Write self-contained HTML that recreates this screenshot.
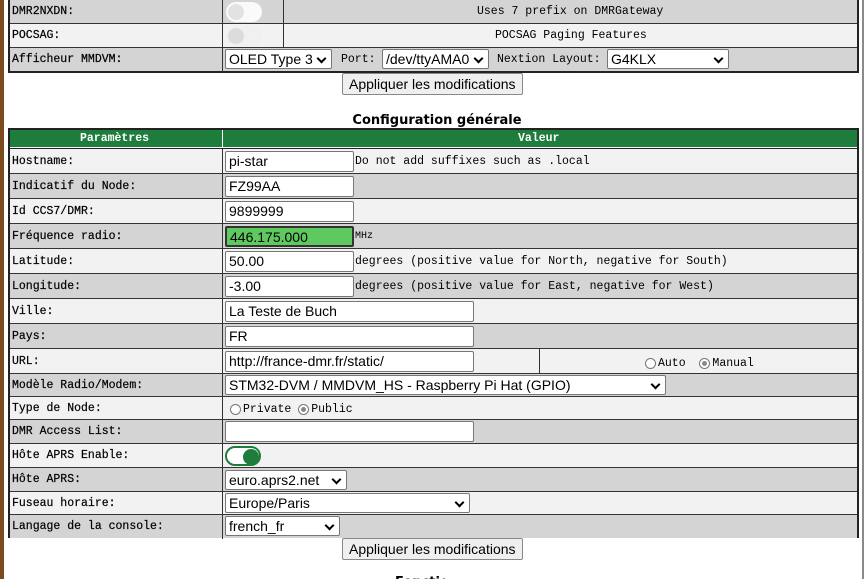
<!DOCTYPE html>
<html><head><meta charset="utf-8"><style>
*{box-sizing:border-box;margin:0;padding:0}
body{width:866px;height:579px;overflow:hidden;background:#fff;position:relative;font-family:"Liberation Mono",monospace;font-size:11.5px;color:#000}
.brown{position:absolute;left:0;top:0;width:4px;height:579px;background:#7b4a1e}
.rline{position:absolute;left:862px;top:0;width:2px;height:579px;background:#8a8a8a}
.tbl{position:absolute;left:8px;width:851px;border:2px solid #222;border-top:none;background:#222}
.row{position:absolute;left:0;width:847px;border-bottom:1px solid #333}
.g{background:#d4d4d4}.l{background:#f2f2f2}
.lab{position:absolute;left:2px;top:0;bottom:0;display:flex;align-items:center;white-space:nowrap;-webkit-text-stroke:0.2px #000}
.vl{position:absolute;left:212px;top:0;bottom:-1px;width:1px;background:#333}
.in{position:absolute;height:21px;border:1px solid #777;background:#fff;font-family:"Liberation Sans",sans-serif;font-size:14px;padding-left:3px;line-height:19px;border-radius:2px;white-space:nowrap;overflow:hidden}
.sel{position:absolute;height:20px;border:1px solid #777;background:#fff;font-family:"Liberation Sans",sans-serif;font-size:14px;padding-left:3px;line-height:18px;border-radius:2px;white-space:nowrap}
.sel:after{content:"";position:absolute;right:6px;top:5px;width:5px;height:5px;border-right:2px solid #000;border-bottom:2px solid #000;transform:rotate(45deg)}
.tx{position:absolute;top:0;bottom:0;display:flex;align-items:center;white-space:nowrap}
.btn{position:absolute;height:22px;border:1px solid #888;background:#efefef;border-radius:2px;font-family:"Liberation Sans",sans-serif;font-size:14px;line-height:20px;padding:0 6px}
.tog{position:absolute;width:36px;height:20px;border-radius:10px;background:#fff}
.tog i{position:absolute;left:2px;top:2px;width:16px;height:16px;border-radius:8px;background:#e2e2e2}
.rad{display:inline-block;width:11px;height:11px;border:1px solid #777;border-radius:50%;background:#fff;vertical-align:-1px;margin-right:2px;position:relative}
.rad.on:after{content:"";position:absolute;left:2px;top:2px;width:5px;height:5px;border-radius:50%;background:#888}
</style></head><body>
<div class="brown"></div><div class="rline"></div>

<div class="tbl" style="top:0;height:73px">
 <div class="row g" style="top:0;height:24px"><div class="lab">DMR2NXDN:</div><div class="vl"></div><div class="vl" style="left:273px"></div>
  <div class="tog" style="left:216px;top:2px;background:#fafafa"><i></i></div><div class="tx" style="left:467px">Uses 7 prefix on DMRGateway</div></div>
 <div class="row l" style="top:24px;height:24px"><div class="lab">POCSAG:</div><div class="vl"></div><div class="vl" style="left:273px"></div>
  <div class="tog" style="left:216px;top:2px;background:#f0f0f0"><i style="background:#dcdcdc"></i></div><div class="tx" style="left:485px">POCSAG Paging Features</div></div>
 <div class="row g" style="top:48px;height:23px;border-bottom:none"><div class="lab">Afficheur MMDVM:</div><div class="vl"></div>
  <div class="sel" style="left:215px;top:1px;width:107px">OLED Type 3</div>
  <div class="tx" style="left:331px">Port:</div>
  <div class="sel" style="left:372px;top:1px;width:107px">/dev/ttyAMA0</div>
  <div class="tx" style="left:487px">Nextion Layout:</div>
  <div class="sel" style="left:597px;top:1px;width:122px">G4KLX</div></div>
</div>
<div class="btn" style="left:342px;top:73px">Appliquer les modifications</div>

<div style="position:absolute;left:4px;width:866px;top:113px;text-align:center;font-family:'DejaVu Sans',sans-serif;font-weight:bold;font-size:13px">Configuration générale</div>

<div class="tbl" style="top:128px;height:410px;border-top:2px solid #222">
 <div class="row" style="top:0;height:18px;background:#1e7d3c;color:#fff;font-weight:bold;border-bottom:1px solid #fff">
  <div class="tx" style="left:70px">Paramètres</div><div class="vl" style="background:#fff"></div><div class="tx" style="left:508px">Valeur</div></div>

 <div class="row l" style="top:19px;height:25px"><div class="lab">Hostname:</div><div class="vl"></div><div class="in" style="left:215px;top:2px;width:129px">pi-star</div><div class="tx" style="left:345px">Do not add suffixes such as .local</div></div>
 <div class="row g" style="top:44px;height:25px"><div class="lab">Indicatif du Node:</div><div class="vl"></div><div class="in" style="left:215px;top:2px;width:129px">FZ99AA</div></div>
 <div class="row l" style="top:69px;height:25px"><div class="lab">Id CCS7/DMR:</div><div class="vl"></div><div class="in" style="left:215px;top:2px;width:129px">9899999</div></div>
 <div class="row g" style="top:94px;height:25px"><div class="lab">Fréquence radio:</div><div class="vl"></div><div class="in" style="left:215px;top:2px;width:129px;background:#5ec95e;border:2px solid #333">446.175.000</div><div class="tx" style="left:345px;font-size:10px">MHz</div></div>
 <div class="row l" style="top:119px;height:25px"><div class="lab">Latitude:</div><div class="vl"></div><div class="in" style="left:215px;top:2px;width:129px">50.00</div><div class="tx" style="left:345px">degrees (positive value for North, negative for South)</div></div>
 <div class="row g" style="top:144px;height:25px"><div class="lab">Longitude:</div><div class="vl"></div><div class="in" style="left:215px;top:2px;width:129px">-3.00</div><div class="tx" style="left:345px">degrees (positive value for East, negative for West)</div></div>
 <div class="row l" style="top:169px;height:25px"><div class="lab">Ville:</div><div class="vl"></div><div class="in" style="left:215px;top:2px;width:249px">La Teste de Buch</div></div>
 <div class="row g" style="top:194px;height:25px"><div class="lab">Pays:</div><div class="vl"></div><div class="in" style="left:215px;top:2px;width:249px">FR</div></div>
 <div class="row l" style="top:219px;height:25px"><div class="lab">URL:</div><div class="vl"></div><div class="vl" style="left:529px"></div><div class="in" style="left:215px;top:2px;width:249px">http://france-dmr.fr/static/</div>
  <div class="tx" style="left:635px;top:4px"><span class="rad"></span>Auto&nbsp;&nbsp;<span class="rad on"></span>Manual</div></div>
 <div class="row g" style="top:244px;height:23px"><div class="lab">Modèle Radio/Modem:</div><div class="vl"></div><div class="sel" style="left:215px;top:1px;width:441px">STM32-DVM / MMDVM_HS - Raspberry Pi Hat (GPIO)</div></div>
 <div class="row l" style="top:267px;height:23px"><div class="lab">Type de Node:</div><div class="vl"></div><div class="tx" style="left:220px;top:3px"><span class="rad"></span>Private&nbsp;<span class="rad on"></span>Public</div></div>
 <div class="row g" style="top:290px;height:24px"><div class="lab">DMR Access List:</div><div class="vl"></div><div class="in" style="left:215px;top:1px;width:249px"></div></div>
 <div class="row l" style="top:314px;height:24px"><div class="lab">Hôte APRS Enable:</div><div class="vl"></div><div class="tog" style="left:215px;top:2px;border:2px solid #1e7d3c"><i style="left:16px;top:1px;background:#1e7d3c"></i></div></div>
 <div class="row g" style="top:338px;height:24px"><div class="lab">Hôte APRS:</div><div class="vl"></div><div class="sel" style="left:215px;top:2px;width:122px">euro.aprs2.net</div></div>
 <div class="row l" style="top:362px;height:23px"><div class="lab">Fuseau horaire:</div><div class="vl"></div><div class="sel" style="left:215px;top:1px;width:245px">Europe/Paris</div></div>
 <div class="row g" style="top:385px;height:23px;border-bottom:none"><div class="lab">Langage de la console:</div><div class="vl"></div><div class="sel" style="left:215px;top:1px;width:115px">french_fr</div></div>
</div>
<div class="btn" style="left:342px;top:538px">Appliquer les modifications</div>
<div style="position:absolute;left:395px;top:576px;width:50px;height:3px;overflow:hidden"><div style="font-family:'DejaVu Sans',sans-serif;font-weight:bold;font-size:13px;margin-top:-1px">Fonctions</div></div>
</body></html>
